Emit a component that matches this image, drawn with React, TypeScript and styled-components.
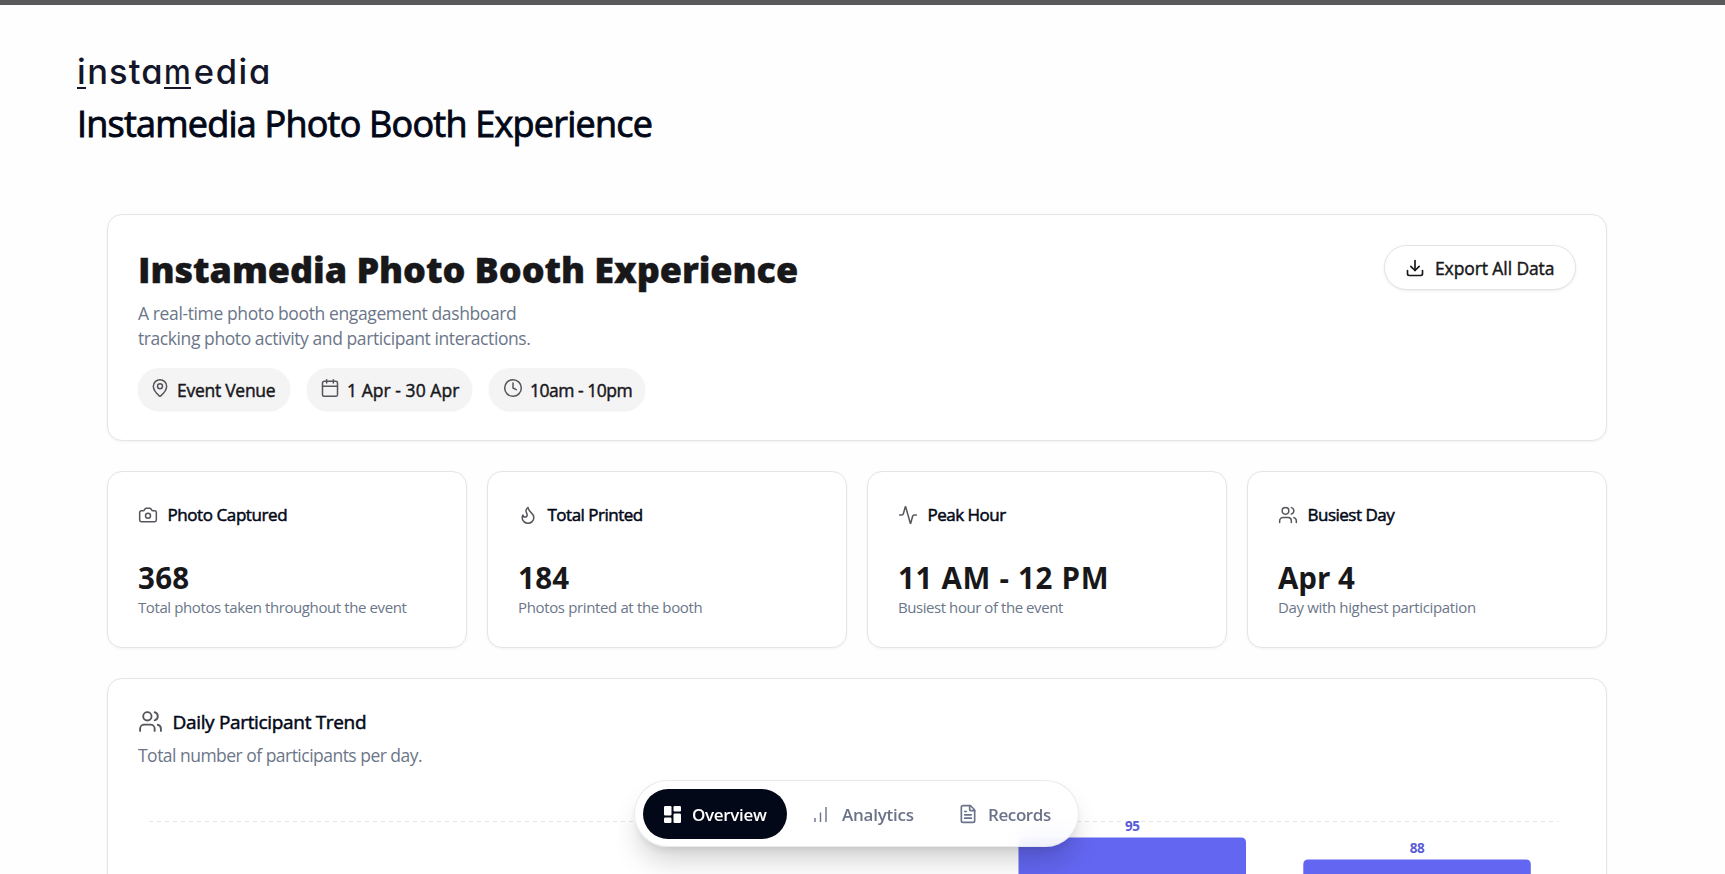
import React from 'react';
import styled, { createGlobalStyle } from 'styled-components';
import { MapPin, Calendar, Clock, Download, Camera, Flame, Activity, Users, FileText } from 'lucide-react';

const Global = createGlobalStyle`
  * { box-sizing: border-box; }
  html, body { margin: 0; height: 874px; overflow: hidden; background: #fefefe; }
  body { font-family: 'Open Sans', 'Noto Sans', sans-serif; color: #020817; }
  h1, h2, h3, p { margin: 0; }
`;

const Page = styled.div`
  height: 874px;
  overflow: hidden;
  display: flex;
  flex-direction: column;
`;

const TopBar = styled.div`
  flex: none;
  height: 5px;
  background: #59595b;
`;

const Header = styled.header`
  flex: none;
  height: 209px;
  padding: 44px 77px 0;
`;

const Logo = styled.div`
  display: flex;
  font-family: Inter, sans-serif;
  font-size: 34.5px;
  line-height: 46px;
  height: 48px;
  font-weight: 500;
  color: #14172a;
  font-feature-settings: 'cv11' 1;
`;

const LogoPart = styled.span<{ $ls: number }>`
  letter-spacing: ${(p) => p.$ls}px;
`;

const Underlined = styled.span<{ $gap: number; $stretch?: number }>`
  height: 40px;
  border-bottom: 2px solid #14172a;
  margin-right: ${(p) => p.$gap}px;
  transform: scaleX(${(p) => p.$stretch ?? 1});
  transform-origin: left;
`;

const Line = styled.span<{ $ls?: number; $stroke?: number }>`
  white-space: pre;
  letter-spacing: ${(p) => p.$ls ?? 0}px;
  -webkit-text-stroke: ${(p) => p.$stroke ?? 0}px currentColor;
`;

const PageTitle = styled.h1`
  font-size: 36px;
  font-weight: 400;
  line-height: 54px;
`;

const Main = styled.main`
  width: 1500px;
  margin-left: 107px;
  display: flex;
  flex-direction: column;
  flex: none;
`;

const Card = styled.section`
  background: #fff;
  border: 1px solid #e5e5e7;
  border-radius: 15px;
  box-shadow: 0 1px 3px rgba(0, 0, 0, 0.05);
`;

const Hero = styled(Card)`
  height: 227px;
  padding: 30px;
  display: flex;
  justify-content: space-between;
  align-items: flex-start;
`;

const HeroTitle = styled.h2`
  font-size: 36px;
  font-weight: 800;
  line-height: 50px;
  color: #18181b;
`;

const HeroText = styled.p`
  display: flex;
  flex-direction: column;
  margin-top: 6px;
  font-size: 17.5px;
  line-height: 25.3px;
  color: #6b7689;
`;

const Pills = styled.div`
  display: flex;
  gap: 17px;
  margin-top: 16px;
`;

const Pill = styled.div<{ $w: number; $pad: number }>`
  width: ${(p) => p.$w}px;
  height: 42px;
  display: flex;
  align-items: center;
  gap: 7px;
  padding: 2px 0 0 ${(p) => p.$pad}px;
  border-radius: 21px;
  background: #f4f4f5;
  box-shadow: 0 1px 2px rgba(0, 0, 0, 0.08);
  font-size: 17.5px;
  color: #18181b;
  svg { color: #55565c; flex: none; margin-top: -3px; }
`;

const ExportButton = styled.button`
  width: 192px;
  height: 45px;
  padding: 0 0 0 20px;
  display: flex;
  align-items: center;
  gap: 10px;
  border: 1px solid #e4e4e7;
  border-radius: 23px;
  background: #fff;
  box-shadow: 0 1px 3px rgba(0, 0, 0, 0.08);
  font: 400 17.5px 'Open Sans', sans-serif;
  color: #18181b;
`;

const Stats = styled.div`
  display: grid;
  grid-template-columns: repeat(4, 1fr);
  gap: 20px;
  margin-top: 30px;
`;

const Stat = styled(Card)`
  height: 177px;
  padding: 29.5px 30px 0;
`;

const StatHead = styled.h3`
  height: 26px;
  display: flex;
  align-items: center;
  gap: 9.5px;
  font-size: 17px;
  font-weight: 400;
  svg { color: #55565c; }
`;

const StatValue = styled.p`
  margin-top: 30.5px;
  font-size: 29.5px;
  font-weight: 700;
  line-height: 40px;
  color: #18181b;
`;

const StatNote = styled.p`
  margin-top: -1px;
  font-size: 15px;
  line-height: 20px;
  color: #6b7689;
`;

const ChartCard = styled(Card)`
  height: 240px;
  margin-top: 30px;
  padding: 30px 30px 0;
`;

const ChartTitle = styled.h3`
  height: 26px;
  display: flex;
  align-items: center;
  gap: 9.5px;
  font-size: 19px;
  font-weight: 400;
  svg { color: #55565c; margin-top: -2px; }
`;

const ChartNote = styled.p`
  margin-top: 7px;
  font-size: 17.5px;
  line-height: 26px;
  color: #6b7689;
`;

const ChartSvg = styled.svg`
  display: block;
  margin-top: 11px;
`;

const Nav = styled.nav`
  position: absolute;
  left: 634px;
  top: 780px;
  width: 445px;
  height: 67px;
  padding: 8px;
  display: flex;
  border: 1px solid rgba(226, 228, 235, 0.8);
  border-radius: 34px;
  background: rgba(255, 255, 255, 0.88);
  backdrop-filter: blur(12px);
  box-shadow: 0 18px 28px -5px rgba(0, 0, 0, 0.18), 0 5px 10px -3px rgba(0, 0, 0, 0.1);
`;

const Tab = styled.div<{ $w: number; $gap: number; $pad: number; $active?: boolean }>`
  width: ${(p) => p.$w}px;
  height: 50px;
  padding-left: ${(p) => p.$pad}px;
  display: flex;
  align-items: center;
  gap: ${(p) => p.$gap}px;
  border-radius: 25px;
  background: ${(p) => (p.$active ? '#020817' : 'transparent')};
  color: ${(p) => (p.$active ? '#fff' : '#6b7289')};
  font-size: 17px;
  font-weight: 600;
`;

const stats = [
  { icon: Camera, title: 'Photo Captured', value: '368', note: 'Total photos taken throughout the event', ls: [-0.42, 0.3, -0.4] },
  { icon: Flame, title: 'Total Printed', value: '184', note: 'Photos printed at the booth', ls: [-0.5, 0.3, -0.36] },
  { icon: Activity, title: 'Peak Hour', value: '11 AM - 12 PM', note: 'Busiest hour of the event', ls: [-0.5, 0.7, -0.44] },
  { icon: Users, title: 'Busiest Day', value: 'Apr 4', note: 'Day with highest participation', ls: [-0.5, 0, -0.35] },
];

const bars = [
  { value: 95, x: 880.5, y: 58.5 },
  { value: 88, x: 1165.3, y: 80.5 },
];

export default function App() {
  return (
    <Page>
      <Global />
      <TopBar />
      <Header>
        <Logo>
          <Underlined $gap={1.5}>i</Underlined>
          <LogoPart $ls={1.1}>nsta</LogoPart>
          <Underlined $gap={-0.5} $stretch={0.87}>m</Underlined>
          <LogoPart $ls={1.6}>edia</LogoPart>
        </Logo>
        <PageTitle><Line $ls={-0.78} $stroke={0.9}>Instamedia Photo Booth Experience</Line></PageTitle>
      </Header>
      <Main>
        <Hero>
          <div>
            <HeroTitle><Line $ls={-0.07} $stroke={0.4}>Instamedia Photo Booth Experience</Line></HeroTitle>
            <HeroText>
              <Line $ls={-0.38}>A real-time photo booth engagement dashboard</Line>
              <Line $ls={-0.42}>tracking photo activity and participant interactions.</Line>
            </HeroText>
            <Pills>
              <Pill $w={152} $pad={12}><MapPin size={20} strokeWidth={1.8} /><Line $ls={-0.27} $stroke={0.45}>Event Venue</Line></Pill>
              <Pill $w={165} $pad={13}><Calendar size={20} strokeWidth={1.8} /><Line $ls={0.05} $stroke={0.45}>1 Apr - 30 Apr</Line></Pill>
              <Pill $w={156} $pad={14}><Clock size={20} strokeWidth={1.8} /><Line $ls={-0.5} $stroke={0.45}>10am - 10pm</Line></Pill>
            </Pills>
          </div>
          <ExportButton><Download size={20} /><Line $ls={-0.1} $stroke={0.45}>Export All Data</Line></ExportButton>
        </Hero>
        <Stats>
          {stats.map(({ icon: Icon, title, value, note, ls }) => (
            <Stat key={title}>
              <StatHead><Icon size={20} strokeWidth={1.8} /><Line $ls={ls[0]} $stroke={0.5}>{title}</Line></StatHead>
              <StatValue><Line $ls={ls[1]}>{value}</Line></StatValue>
              <StatNote><Line $ls={ls[2]}>{note}</Line></StatNote>
            </Stat>
          ))}
        </Stats>
        <ChartCard>
          <ChartTitle><Users size={25} strokeWidth={1.8} /><Line $ls={-0.33} $stroke={0.5}>Daily Participant Trend</Line></ChartTitle>
          <ChartNote><Line $ls={-0.52}>Total number of participants per day.</Line></ChartNote>
          <ChartSvg width="1438" height="110" viewBox="0 0 1438 110">
            <line x1="11" x2="1421" y1="42.5" y2="42.5" stroke="#e6e6e9" strokeDasharray="4 4" />
            {bars.map((b) => (
              <g key={b.value}>
                <path d={`M${b.x} 110V${b.y + 5}q0 -5 5 -5h217.5q5 0 5 5V110z`} fill="#6366f1" />
                <text x={b.x + 113.7} y={b.y - 6.5} textAnchor="middle" fontSize="13.5" fontWeight="700" letterSpacing="-0.4" fill="#5a5bd6">{b.value}</text>
              </g>
            ))}
          </ChartSvg>
        </ChartCard>
      </Main>
      <Nav>
        <Tab $w={144} $pad={21} $gap={11} $active>
          <svg width="17" height="17" viewBox="0 0 17 17" fill="currentColor">
            <rect width="7.5" height="9.5" rx="1.2" />
            <rect y="11.5" width="7.5" height="5.5" rx="1.2" />
            <rect x="9.5" width="7.5" height="5.5" rx="1.2" />
            <rect x="9.5" y="7.5" width="7.5" height="9.5" rx="1.2" />
          </svg>
          <Line $ls={-0.33}>Overview</Line>
        </Tab>
        <Tab $w={144} $pad={27} $gap={15}>
          <svg width="13" height="15" viewBox="0 0 13 15" fill="none" stroke="currentColor" strokeWidth="1.4">
            <path d="M1 15v-4M6.5 15V5.5M12 15V0" />
          </svg>
          <Line $ls={-0.25}>Analytics</Line>
        </Tab>
        <Tab $w={130} $pad={27} $gap={10}>
          <FileText size={20} />
          <Line $ls={-0.4}>Records</Line>
        </Tab>
      </Nav>
    </Page>
  );
}
